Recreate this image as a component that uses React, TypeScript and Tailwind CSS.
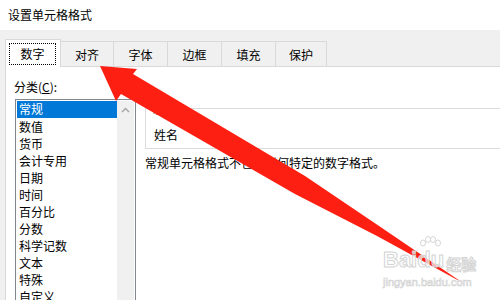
import React from "react";

const tabs = [
  { label: "数字", w: "w-[56px]" },
  { label: "对齐", w: "w-[53px]" },
  { label: "字体", w: "w-[54px]" },
  { label: "边框", w: "w-[54px]" },
  { label: "填充", w: "w-[54px]" },
  { label: "保护", w: "w-[51px]" },
];

const categories = [
  "常规",
  "数值",
  "货币",
  "会计专用",
  "日期",
  "时间",
  "百分比",
  "分数",
  "科学记数",
  "文本",
  "特殊",
  "自定义",
];

function Arrow() {
  return (
    <svg className="absolute inset-0 pointer-events-none" width="500" height="300" viewBox="0 0 500 300">
      <polygon
        fill="#fd1f12"
        points="100,66 137,69 133,74 305,176 382,228 463,283 377,236 295,194 121,94 116,101"
      />
    </svg>
  );
}

function Watermark() {
  return (
    <div className="absolute left-[383px] top-[236px] w-[95px] h-[60px] font-['Liberation_Sans',sans-serif] pointer-events-none">
      <svg className="absolute left-[36px] top-0" width="22" height="14" viewBox="0 0 22 14">
        <g fill="rgba(255,255,255,0.75)" stroke="#d6d6d6" strokeWidth="1">
          <ellipse cx="4" cy="7" rx="2.5" ry="3" />
          <ellipse cx="9" cy="3.5" rx="2.5" ry="3" />
          <ellipse cx="14" cy="3.5" rx="2.5" ry="3" />
          <ellipse cx="19" cy="7" rx="2.5" ry="3" />
        </g>
      </svg>
      <div className="absolute left-0 top-[10px] flex items-end h-[25px] text-[22px] font-bold leading-none text-white/70 [-webkit-text-stroke:1px_#d4d4d4]">
        <span>Baidu</span>
        <span className="ml-[2px] text-[15px] font-['Noto_Sans_CJK_SC',sans-serif] leading-none">经验</span>
      </div>
      <div className="absolute left-0 top-[41px] text-[11px] leading-none text-white/70 [-webkit-text-stroke:0.7px_#d4d4d4]">
        jingyan.baidu.com
      </div>
    </div>
  );
}

export default function App() {
  return (
    <div className="relative w-[500px] h-[300px] overflow-hidden bg-white font-['Noto_Sans_CJK_SC','Noto_Sans',sans-serif] text-[12px] text-black">
      <div className="h-[30px] pl-[8px] flex items-center">
        <span className="text-[12px] leading-none">设置单元格格式</span>
      </div>

      <div className="h-[270px] bg-[#f0f0f0] pl-[5px] pt-[9px] flex flex-col">
        <div className="flex items-end h-[27px]">
          {tabs.map((tab, i) =>
            i === 0 ? (
              <div
                key={tab.label}
                className={`${tab.w} h-[28px] -mb-px relative z-10 bg-white border-l border-t border-r border-[#d9d9d9] pt-[3px] pl-[3px] pr-[4px] pb-[2px]`}
              >
                <div className="h-full border border-dotted border-black flex items-center justify-center">
                  {tab.label}
                </div>
              </div>
            ) : (
              <div
                key={tab.label}
                className={`${tab.w} h-[25px] border-t border-r border-[#d9d9d9] bg-[#f0f0f0] flex items-center justify-center pt-[1px]`}
              >
                {tab.label}
              </div>
            )
          )}
        </div>

        <div className="flex-1 bg-white border-t border-l border-[#d9d9d9] flex">
          <div className="w-[139px] shrink-0 pl-[8px] pt-[12px]">
            <div className="h-[16px] leading-[16px]">
              分类(<span className="underline">C</span>):
            </div>
            <div className="ml-[1px] mt-[4px] w-[121px] h-[220px] border border-[#828790] flex p-px">
              <div className="flex-1 flex flex-col">
                {categories.map((c, i) => (
                  <div
                    key={c}
                    className={`h-[17px] leading-[16px] pl-[2px] ${
                      i === 0 ? "bg-[#0078d7] text-white h-[16px] mb-px" : ""
                    }`}
                  >
                    {c}
                  </div>
                ))}
              </div>
              <div className="w-[17px] bg-[#f0f0f0] flex justify-center pt-[6px]">
                <svg width="9" height="6" viewBox="0 0 9 6">
                  <path d="M1 5 L4.5 1.5 L8 5" fill="none" stroke="#a3a3a3" strokeWidth="1.4" />
                </svg>
              </div>
            </div>
          </div>

          <div className="flex-1 pt-[41px]">
            <div className="relative w-[380px] h-[41px] border border-[#dcdcdc] pl-[8px] pt-[18px]">
              <span className="absolute left-[5px] -top-[8px] bg-white px-[2px] leading-[16px]">示例</span>
              <div className="leading-[16px]">姓名</div>
            </div>
            <div className="mt-[6px] leading-[16px]">常规单元格格式不包含任何特定的数字格式。</div>
          </div>
        </div>
      </div>

      <Arrow />
      <Watermark />
    </div>
  );
}
